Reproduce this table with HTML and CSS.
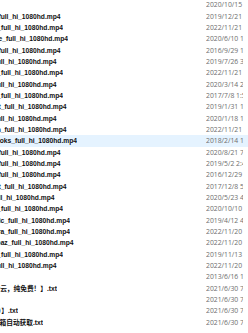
FILE: index.html
```html
<!DOCTYPE html>
<html lang="zh">
<head>
<meta charset="utf-8">
<title>文件列表</title>
<link rel="stylesheet" href="styles.css">
</head>
<body>
<div class="list">
  <div class="row"><div class="name"></div><div class="date">2020/10/15 21:40</div></div>
  <div class="row"><div class="name w-ull"><span>Deep_Ocean_full_hi_1080hd.mp4</span></div><div class="date">2019/12/21 10:12</div></div>
  <div class="row"><div class="name w-full"><span>Wild_Planet_full_hi_1080hd.mp4</span></div><div class="date">2022/11/21 9:03</div></div>
  <div class="row"><div class="name w-efull"><span>Into_Nature_full_hi_1080hd.mp4</span></div><div class="date">2020/6/10 14:22</div></div>
  <div class="row"><div class="name w-ull"><span>Winter_full_hi_1080hd.mp4</span></div><div class="date">2016/9/29 15:47</div></div>
  <div class="row"><div class="name w-ll"><span>Sea_full_hi_1080hd.mp4</span></div><div class="date">2019/7/26 3:18</div></div>
  <div class="row"><div class="name w-full"><span>Desert_full_hi_1080hd.mp4</span></div><div class="date">2022/11/21 9:05</div></div>
  <div class="row"><div class="name w-ll"><span>River_full_hi_1080hd.mp4</span></div><div class="date">2020/3/14 22:10</div></div>
  <div class="row"><div class="name w-full"><span>Islands_full_hi_1080hd.mp4</span></div><div class="date">2017/7/8 1:54</div></div>
  <div class="row"><div class="name w-ufull"><span>The_Forest_full_hi_1080hd.mp4</span></div><div class="date">2019/1/31 16:30</div></div>
  <div class="row"><div class="name w-ll"><span>Around_full_hi_1080hd.mp4</span></div><div class="date">2020/1/18 11:02</div></div>
  <div class="row"><div class="name w-ufull"><span>Mountain_full_hi_1080hd.mp4</span></div><div class="date">2022/11/21 9:08</div></div>
  <div class="row sel"><div class="name w-oks"><span>Old_Books_full_hi_1080hd.mp4</span></div><div class="date">2018/2/14 19:26</div></div>
  <div class="row"><div class="name w-ull"><span>Cities_full_hi_1080hd.mp4</span></div><div class="date">2020/8/21 7:44</div></div>
  <div class="row"><div class="name w-ull"><span>Storms_full_hi_1080hd.mp4</span></div><div class="date">2019/5/2 2:41</div></div>
  <div class="row"><div class="name w-ull"><span>Glacier_full_hi_1080hd.mp4</span></div><div class="date">2016/12/29 8:15</div></div>
  <div class="row"><div class="name w-ufull"><span>The_Coast_full_hi_1080hd.mp4</span></div><div class="date">2017/12/8 5:37</div></div>
  <div class="row"><div class="name w-l"><span>Jungle_full_hi_1080hd.mp4</span></div><div class="date">2020/5/23 4:09</div></div>
  <div class="row"><div class="name w-full"><span>Savanna_full_hi_1080hd.mp4</span></div><div class="date">2020/10/10 20:51</div></div>
  <div class="row"><div class="name w-cfull"><span>Arctic_full_hi_1080hd.mp4</span></div><div class="date">2019/4/12 4:26</div></div>
  <div class="row"><div class="name w-cfull"><span>Sahara_full_hi_1080hd.mp4</span></div><div class="date">2022/11/20 23:12</div></div>
  <div class="row"><div class="name w-az"><span>Topaz_full_hi_1080hd.mp4</span></div><div class="date">2022/11/20 23:15</div></div>
  <div class="row"><div class="name w-full"><span>Volcano_full_hi_1080hd.mp4</span></div><div class="date">2019/11/13 18:40</div></div>
  <div class="row"><div class="name w-ll"><span>Canyon_full_hi_1080hd.mp4</span></div><div class="date">2022/11/20 23:18</div></div>
  <div class="row"><div class="name"></div><div class="date">2013/6/16 12:00</div></div>
  <div class="row"><div class="name w-yun"><span>【更多资源请访问网盘云，纯免费！】.txt</span></div><div class="date">2021/6/30 7:21</div></div>
  <div class="row"><div class="name"></div><div class="date">2021/6/30 7:21</div></div>
  <div class="row"><div class="name w-br"><span>【网盘资源（永久更新）】.txt</span></div><div class="date">2021/6/30 7:21</div></div>
  <div class="row"><div class="name w-xiang"><span>发送任意邮件到邮箱自动获取.txt</span></div><div class="date">2021/6/30 7:21</div></div>
</div>
</body>
</html>
```

FILE: styles.css
```css
html, body {
  margin: 0;
  padding: 0;
  background: #ffffff;
  overflow: hidden;
}

.list {
  display: flex;
  flex-direction: column;
  margin-top: -0.8px;
}

.row {
  display: grid;
  grid-template-columns: 206px 37px;
  height: 11.35px;
  line-height: 11.35px;
}

.sel {
  background: #e5f3ff;
}

/* names are long and the name column is scrolled left:
   each cell shows only the tail of its file name */
.name {
  display: flex;
  justify-content: flex-end;
  overflow: hidden;
  white-space: nowrap;
  justify-self: start;
  width: 0;
  font-family: "Liberation Sans", "Noto Sans CJK SC", sans-serif;
  font-weight: bold;
  font-size: 6.7px;
  color: #111111;
}

.name span {
  flex: none;
}

.w-l     { width: 54.5px; }
.w-ll    { width: 56.5px; }
.w-ull   { width: 60.5px; }
.w-full  { width: 63px; }
.w-ufull { width: 66.5px; }
.w-efull { width: 68px; }
.w-cfull { width: 70px; }
.w-az    { width: 73.5px; }
.w-oks   { width: 77px; }
.w-yun   { width: 57px; }
.w-br    { width: 18px; }
.w-xiang { width: 43px; }

.date {
  overflow: hidden;
  white-space: nowrap;
  font-family: "Open Sans", "Noto Sans", sans-serif;
  font-size: 6.8px;
  color: #6d6d6d;
}
```
